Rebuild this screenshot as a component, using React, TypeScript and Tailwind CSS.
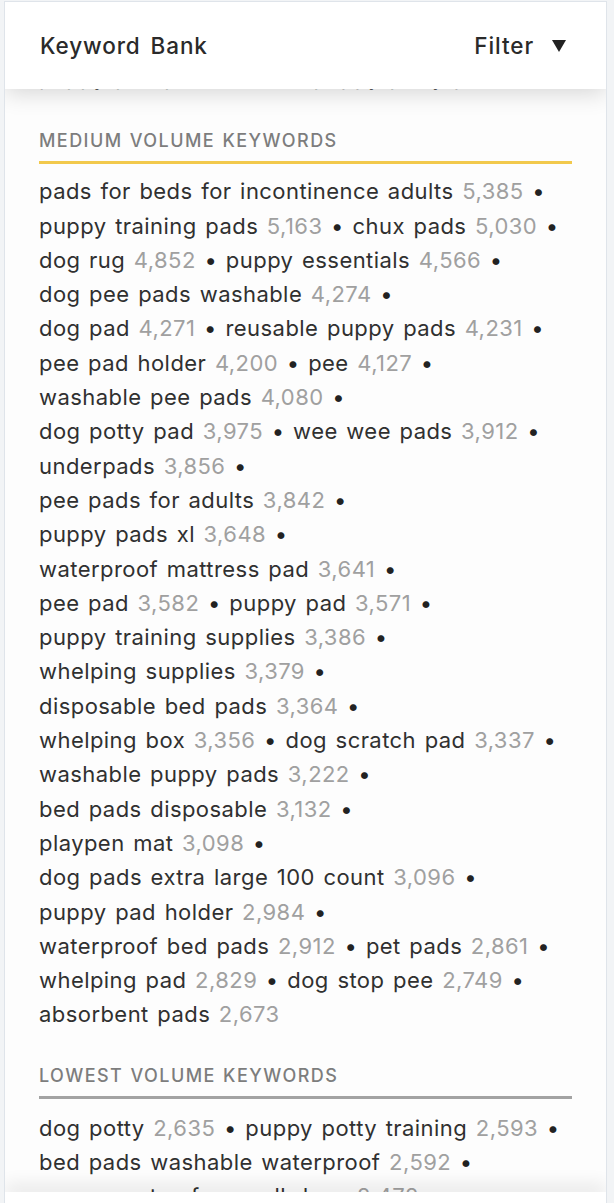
import React from "react";

type Kw = [string, string];

const medium: Kw[][] = [
  [["pads for beds for incontinence adults", "5,385"]],
  [["puppy training pads", "5,163"], ["chux pads", "5,030"]],
  [["dog rug", "4,852"], ["puppy essentials", "4,566"]],
  [["dog pee pads washable", "4,274"]],
  [["dog pad", "4,271"], ["reusable puppy pads", "4,231"]],
  [["pee pad holder", "4,200"], ["pee", "4,127"]],
  [["washable pee pads", "4,080"]],
  [["dog potty pad", "3,975"], ["wee wee pads", "3,912"]],
  [["underpads", "3,856"]],
  [["pee pads for adults", "3,842"]],
  [["puppy pads xl", "3,648"]],
  [["waterproof mattress pad", "3,641"]],
  [["pee pad", "3,582"], ["puppy pad", "3,571"]],
  [["puppy training supplies", "3,386"]],
  [["whelping supplies", "3,379"]],
  [["disposable bed pads", "3,364"]],
  [["whelping box", "3,356"], ["dog scratch pad", "3,337"]],
  [["washable puppy pads", "3,222"]],
  [["bed pads disposable", "3,132"]],
  [["playpen mat", "3,098"]],
  [["dog pads extra large 100 count", "3,096"]],
  [["puppy pad holder", "2,984"]],
  [["waterproof bed pads", "2,912"], ["pet pads", "2,861"]],
  [["whelping pad", "2,829"], ["dog stop pee", "2,749"]],
  [["absorbent pads", "2,673"]],
];

const lowest: Kw[][] = [
  [["dog potty", "2,635"], ["puppy potty training", "2,593"]],
  [["bed pads washable waterproof", "2,592"]],
  [["puppy crates for small dogs", "2,472"]],
];

function Line({ items, last }: { items: Kw[]; last?: boolean }) {
  return (
    <div className="whitespace-nowrap">
      {items.map(([k, n], i) => (
        <span key={k}>
          {k} <span className="text-[#a0a0a0]">{n}</span>
          {!(last && i === items.length - 1) && <span className="text-[#222]"> • </span>}
        </span>
      ))}
    </div>
  );
}

export default function App() {
  return (
    <div className="h-[1203px] bg-[#f2f4f6] pl-[4px] pr-[7px] pt-[1px]" style={{ fontFamily: "Inter, 'Open Sans', sans-serif" }}>
      <div className="flex h-full flex-col overflow-hidden border-x border-t border-[#dfe4ea] bg-white">
        <header className="relative z-10 flex h-[87px] shrink-0 items-center justify-between bg-white pl-[35px] pr-[40px] text-[22.5px] font-medium tracking-[0.04em] [word-spacing:3px] text-[#2a2a2a] shadow-[0_4px_22px_rgba(0,0,0,0.16)]">
          <span>Keyword Bank</span>
          <span className="flex items-center gap-[18px]">
            Filter
            <svg width="14" height="12" viewBox="0 0 14 12"><path d="M0 0h14L7 12z" fill="#222" /></svg>
          </span>
        </header>
        <main className="flex-1 overflow-hidden bg-[#fdfdfd] px-[34px] text-[22px] leading-[34.3px] tracking-[0.02em] [word-spacing:2px] text-[#303030]">
          <div className="-mt-[29px]">
            <Line items={[["puppy pee pads", "5,514"], ["puppy potty pads", "5,402"]]} />
            <h3 className="mt-[37px] border-b-[3px] border-[#f2c94c] pb-[10px] text-[18px] leading-[20px] font-medium tracking-[0.08em] [word-spacing:1px] text-[#7d7d7d] uppercase">
              Medium Volume Keywords
            </h3>
            <div className="mt-[10px]">
              {medium.map((l, i) => (
                <Line key={i} items={l} last={i === medium.length - 1} />
              ))}
            </div>
            <h3 className="mt-[34px] border-b-[3px] border-[#a3a3a3] pb-[10px] text-[18px] leading-[20px] font-medium tracking-[0.08em] [word-spacing:1px] text-[#7d7d7d] uppercase">
              Lowest Volume Keywords
            </h3>
            <div className="mt-[12px]">
              {lowest.map((l, i) => (
                <Line key={i} items={l} />
              ))}
            </div>
          </div>
        </main>
        <footer className="relative z-10 h-[11px] shrink-0 bg-white shadow-[0_-6px_18px_rgba(0,0,0,0.12)]" />
      </div>
    </div>
  );
}
